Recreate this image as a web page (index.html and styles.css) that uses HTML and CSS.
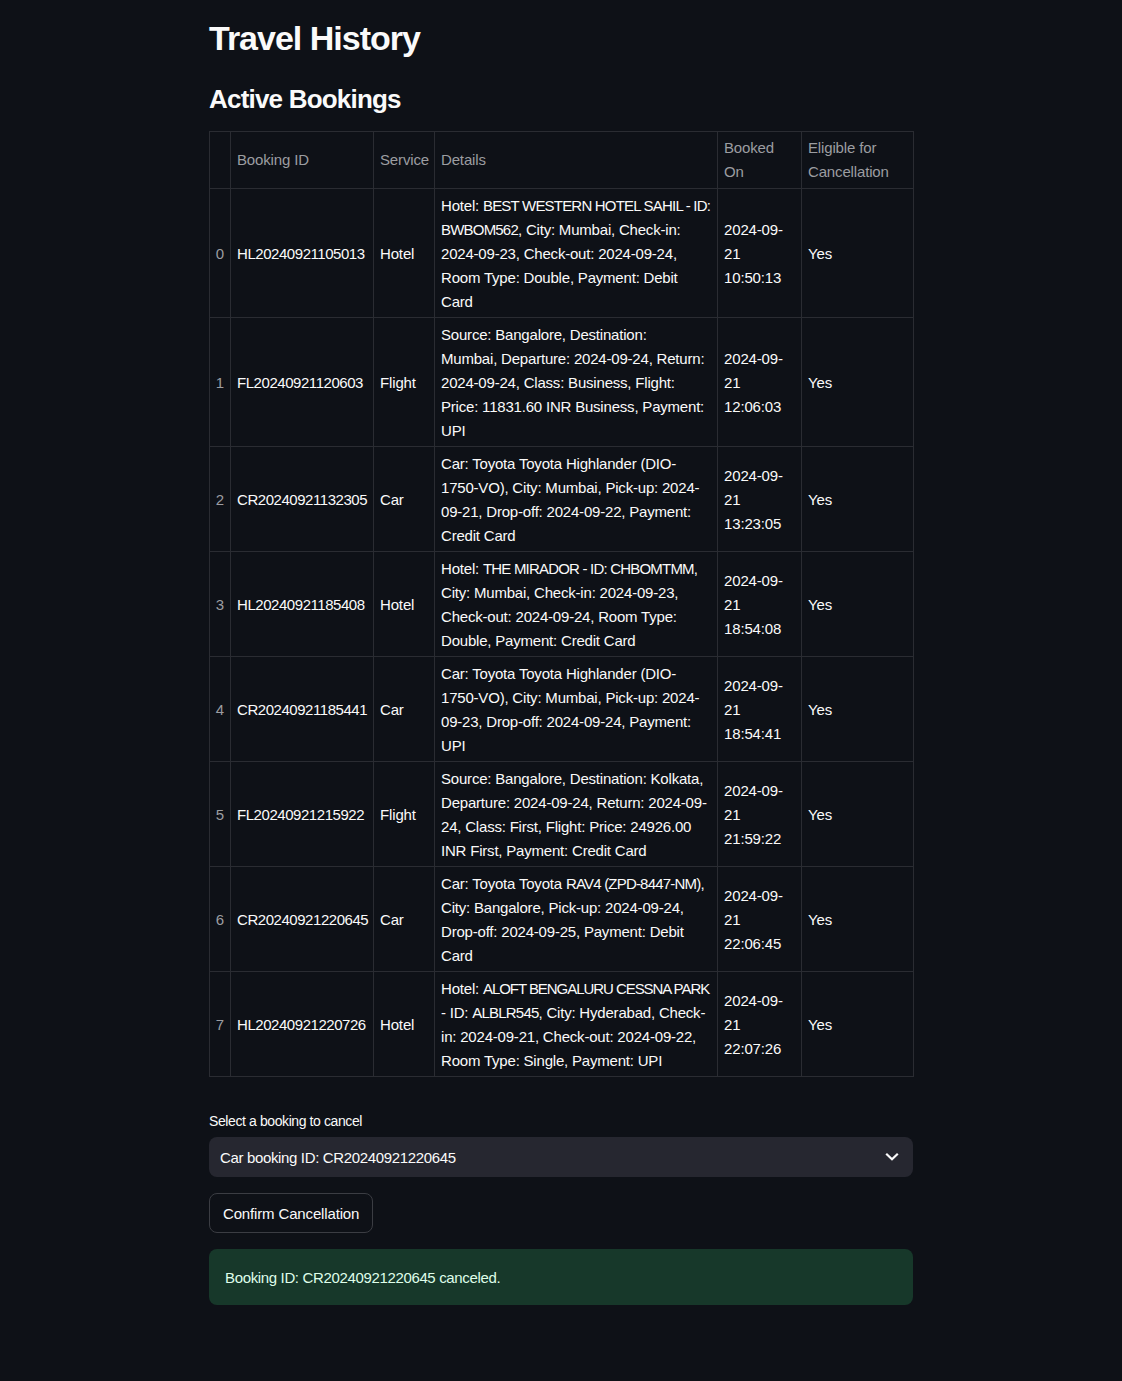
FILE: index.html
```html
<!DOCTYPE html>
<html lang="en">
<head>
<meta charset="utf-8">
<title>Travel History</title>
<link rel="stylesheet" href="styles.css">
</head>
<body>
<main class="page">
  <h1 class="title">Travel History</h1>
  <h2 class="subtitle">Active Bookings</h2>
  <table class="grid">
    <colgroup>
      <col class="c-idx"><col class="c-id"><col class="c-svc"><col class="c-det"><col class="c-on"><col class="c-el">
    </colgroup>
    <thead>
      <tr>
        <th class="idx"></th>
        <th>Booking ID</th>
        <th>Service</th>
        <th>Details</th>
        <th>Booked<br>On</th>
        <th>Eligible for<br>Cancellation</th>
      </tr>
    </thead>
    <tbody>
      <tr>
        <td class="idx">0</td>
        <td class="num">HL20240921105013</td>
        <td>Hotel</td>
        <td class="det">Hotel: <span class="caps">BEST WESTERN HOTEL SAHIL - ID:</span><br><span class="caps">BWBOM562</span>, City: Mumbai, Check-in:<br>2024-09-23, Check-out: 2024-09-24,<br>Room Type: Double, Payment: Debit<br>Card</td>
        <td>2024-09-<br>21<br>10:50:13</td>
        <td>Yes</td>
      </tr>
      <tr>
        <td class="idx">1</td>
        <td class="num">FL20240921120603</td>
        <td>Flight</td>
        <td class="det">Source: Bangalore, Destination:<br>Mumbai, Departure: 2024-09-24, Return:<br>2024-09-24, Class: Business, Flight:<br>Price: 11831.60 INR Business, Payment:<br>UPI</td>
        <td>2024-09-<br>21<br>12:06:03</td>
        <td>Yes</td>
      </tr>
      <tr>
        <td class="idx">2</td>
        <td class="num">CR20240921132305</td>
        <td>Car</td>
        <td class="det">Car: Toyota Toyota Highlander (DIO-<br>1750-VO), City: Mumbai, Pick-up: 2024-<br>09-21, Drop-off: 2024-09-22, Payment:<br>Credit Card</td>
        <td>2024-09-<br>21<br>13:23:05</td>
        <td>Yes</td>
      </tr>
      <tr>
        <td class="idx">3</td>
        <td class="num">HL20240921185408</td>
        <td>Hotel</td>
        <td class="det">Hotel: <span class="caps">THE MIRADOR - ID: CHBOMTMM,</span><br>City: Mumbai, Check-in: 2024-09-23,<br>Check-out: 2024-09-24, Room Type:<br>Double, Payment: Credit Card</td>
        <td>2024-09-<br>21<br>18:54:08</td>
        <td>Yes</td>
      </tr>
      <tr>
        <td class="idx">4</td>
        <td class="num">CR20240921185441</td>
        <td>Car</td>
        <td class="det">Car: Toyota Toyota Highlander (DIO-<br>1750-VO), City: Mumbai, Pick-up: 2024-<br>09-23, Drop-off: 2024-09-24, Payment:<br>UPI</td>
        <td>2024-09-<br>21<br>18:54:41</td>
        <td>Yes</td>
      </tr>
      <tr>
        <td class="idx">5</td>
        <td class="num">FL20240921215922</td>
        <td>Flight</td>
        <td class="det">Source: Bangalore, Destination: Kolkata,<br>Departure: 2024-09-24, Return: 2024-09-<br>24, Class: First, Flight: Price: 24926.00<br>INR First, Payment: Credit Card</td>
        <td>2024-09-<br>21<br>21:59:22</td>
        <td>Yes</td>
      </tr>
      <tr>
        <td class="idx">6</td>
        <td class="num">CR20240921220645</td>
        <td>Car</td>
        <td class="det">Car: Toyota Toyota <span class="caps">RAV4 (ZPD-8447-NM),</span><br>City: Bangalore, Pick-up: 2024-09-24,<br>Drop-off: 2024-09-25, Payment: Debit<br>Card</td>
        <td>2024-09-<br>21<br>22:06:45</td>
        <td>Yes</td>
      </tr>
      <tr>
        <td class="idx">7</td>
        <td class="num">HL20240921220726</td>
        <td>Hotel</td>
        <td class="det">Hotel: <span class="caps caps-tight">ALOFT BENGALURU CESSNA PARK</span><br>- ID: <span class="caps">ALBLR545</span>, City: Hyderabad, Check-<br>in: 2024-09-21, Check-out: 2024-09-22,<br>Room Type: Single, Payment: UPI</td>
        <td>2024-09-<br>21<br>22:07:26</td>
        <td>Yes</td>
      </tr>
    </tbody>
  </table>

  <section class="form">
    <label class="label">Select a booking to cancel</label>
    <div class="select">
      <span class="select-value">Car booking ID: CR20240921220645</span>
      <svg class="chevron" width="14" height="10" viewBox="0 0 14 10" aria-hidden="true"><path d="M2 2.5 L7 7.3 L12 2.5" fill="none" stroke="#fafafa" stroke-width="2.2" stroke-linecap="square" stroke-linejoin="miter"/></svg>
    </div>
    <button class="btn" type="button">Confirm Cancellation</button>
    <div class="alert">Booking ID: CR20240921220645 canceled.</div>
  </section>
</main>
</body>
</html>
```
FILE: styles.css
```css
* { box-sizing: border-box; }
html, body {
  margin: 0;
  padding: 0;
  background: #0e1117;
  color: #fafafa;
  font-family: "Liberation Sans", Arial, sans-serif;
}
.page {
  width: 704px;
  margin: 0 auto;
  padding: 18px 0 60px;
}
.title {
  margin: 0;
  font-size: 34px;
  line-height: 40px;
  font-weight: 700;
  letter-spacing: -1px;
}
.subtitle {
  margin: 25px 0 16px;
  font-size: 26px;
  line-height: 32px;
  font-weight: 700;
  letter-spacing: -0.8px;
}
.grid {
  width: 704px;
  border-collapse: collapse;
  table-layout: fixed;
  font-size: 15px;
  line-height: 24px;
  letter-spacing: -0.15px;
}
.c-idx { width: 21px; }
.c-id { width: 143px; }
.c-svc { width: 61px; }
.c-det { width: 283px; }
.c-on { width: 84px; }
.c-el { width: 112px; }
.grid th, .grid td {
  border: 1px solid #2a2c32;
  padding: 4px 6px;
  text-align: left;
  vertical-align: middle;
  white-space: nowrap;
  font-weight: 400;
}
.grid td { padding: 5px 6px 3px; }
.grid th { color: #9c9da1; }
.grid td { color: #fafafa; }
.grid .idx {
  color: #9c9da1;
  text-align: right;
  padding-left: 4px;
  padding-right: 6px;
}
.grid .num { letter-spacing: -0.45px; }
.grid .det { letter-spacing: -0.2px; }
.grid .caps { letter-spacing: -0.8px; }
.grid .caps-tight { letter-spacing: -1.05px; }
.form {
  display: flex;
  flex-direction: column;
  align-items: flex-start;
  padding-top: 34px;
}
.label {
  font-size: 14px;
  line-height: 20px;
  margin-bottom: 6px;
  letter-spacing: -0.4px;
}
.select {
  width: 100%;
  height: 40px;
  background: #262730;
  border-radius: 8px;
  display: flex;
  align-items: center;
  justify-content: space-between;
  padding: 0 14px 0 11px;
  font-size: 15px;
  letter-spacing: -0.35px;
}
.chevron { display: block; }
.btn {
  margin-top: 16px;
  height: 40px;
  padding: 0 13px;
  background: #0e1117;
  color: #fafafa;
  border: 1px solid #3b3d43;
  border-radius: 8px;
  font-family: inherit;
  font-size: 15px;
  letter-spacing: -0.15px;
}
.alert {
  margin-top: 16px;
  width: 100%;
  height: 56px;
  border-radius: 8px;
  background: #17382a;
  color: #dffde9;
  display: flex;
  align-items: center;
  padding: 0 16px;
  font-size: 15px;
  letter-spacing: -0.35px;
}
```
